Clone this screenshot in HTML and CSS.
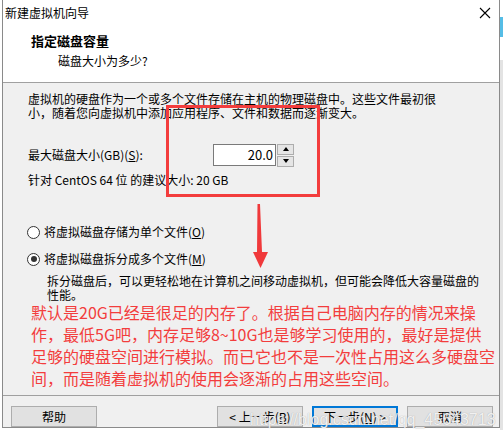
FILE: index.html
```html
<!DOCTYPE html>
<html lang="zh-CN">
<head>
<meta charset="utf-8">
<title>新建虚拟机向导</title>
<link rel="stylesheet" href="styles.css">
</head>
<body>
<div class="edge-blue"></div>
<div class="edge-gray"></div>
<div class="window">
  <div class="titlebar">
    <span class="title">新建虚拟机向导</span>
    <svg class="close" width="12" height="12" viewBox="0 0 12 12"><path d="M1 1 L11 11 M11 1 L1 11" stroke="#000" stroke-width="1.1" fill="none"/></svg>
  </div>
  <div class="header">
    <div class="heading">指定磁盘容量</div>
    <div class="subheading">磁盘大小为多少?</div>
  </div>
  <div class="body">
    <p class="intro">虚拟机的硬盘作为一个或多个文件存储在主机的物理磁盘中。这些文件最初很<br>小，随着您向虚拟机中添加应用程序、文件和数据而逐渐变大。</p>
    <div class="size-row">
      <span class="size-label">最大磁盘大小(GB)(<u>S</u>):</span>
      <div class="spin">
        <div class="spin-input">20.0</div>
        <div class="spin-btns">
          <div class="spin-btn"><span class="tri-up"></span></div>
          <div class="spin-btn"><span class="tri-down"></span></div>
        </div>
      </div>
    </div>
    <p class="recommend">针对 CentOS 64 位 的建议大小: 20 GB</p>
    <div class="radio-row first">
      <span class="radio"></span>
      <span>将虚拟磁盘存储为单个文件(<u>O</u>)</span>
    </div>
    <div class="radio-row second">
      <span class="radio checked"></span>
      <span>将虚拟磁盘拆分成多个文件(<u>M</u>)</span>
    </div>
    <p class="desc">拆分磁盘后，可以更轻松地在计算机之间移动虚拟机，但可能会降低大容量磁盘的<br>性能。</p>
    <p class="note">默认是20G已经是很足的内存了。根据自己电脑内存的情况来操<br>作，最低5G吧，内存足够8~10G也是够学习使用的，最好是提供<br>足够的硬盘空间进行模拟。而已它也不是一次性占用这么多硬盘空<br>间，而是随着虚拟机的使用会逐渐的占用这些空间。</p>
  </div>
  <div class="footer">
    <button class="btn">帮助</button>
    <div class="nav">
      <button class="btn">&lt; 上一步(<u>B</u>)</button>
      <button class="btn focused">下一步(<u>N</u>) &gt;</button>
      <button class="btn">取消</button>
    </div>
    <span class="watermark">https://blog.csdn.net/qq_45643713</span>
  </div>
  <div class="highlight"></div>
  <svg class="arrow" width="30" height="70" viewBox="245 200 30 70"><polygon points="257.5,204 260,204 262,252 268,252 260.5,268 253,252 257,252" fill="#f0393b"/></svg>
</div>
</body>
</html>
```
FILE: styles.css
```css
html, body {
  margin: 0;
  padding: 0;
  background: #ffffff;
}
body {
  width: 503px;
  height: 430px;
  position: relative;
  overflow: hidden;
  font-family: "Noto Sans CJK SC", "Microsoft YaHei", sans-serif;
  font-size: 12px;
  color: #000;
}
.edge-blue {
  position: absolute;
  left: 500px;
  top: 17px;
  width: 3px;
  height: 20px;
  background: #55bde6;
}
.edge-gray {
  position: absolute;
  left: 500px;
  top: 60px;
  width: 3px;
  height: 370px;
  background: #e3e3e3;
}
.window {
  position: relative;
  margin-left: 2px;
  width: 496px;
  height: 427px;
  border-left: 1px solid #8a8a8a;
  border-right: 1px solid #8a8a8a;
  border-bottom: 1px solid #8a8a8a;
  background: #ffffff;
  display: flex;
  flex-direction: column;
}
.titlebar {
  height: 27px;
  display: flex;
  align-items: center;
  justify-content: space-between;
  padding-left: 2px;
  padding-right: 8px;
  flex: none;
}
.title {
  line-height: 14px;
  margin-top: -1px;
}
.close {
  display: block;
  margin-top: -1px;
}
.header {
  height: 55px;
  flex: none;
  border-bottom: 1px solid #a0a0a0;
}
.heading {
  font-weight: bold;
  font-size: 13px;
  line-height: 16px;
  padding-left: 28px;
  margin-top: 6px;
}
.subheading {
  line-height: 14px;
  padding-left: 55px;
  margin-top: 5px;
}
.body {
  height: 303px;
  flex: none;
  background: #f0f0f0;
  padding: 9px 0 0 25px;
  border-bottom: 1px solid #a0a0a0;
}
.body p {
  margin: 0;
}
.intro {
  line-height: 14px;
}
.size-row {
  display: flex;
  align-items: center;
  margin-top: 24px;
  height: 22px;
}
.size-label {
  width: 185px;
  line-height: 14px;
}
.spin {
  display: flex;
  align-items: center;
}
.spin-input {
  width: 59px;
  height: 20px;
  border: 1px solid #7a7a7a;
  background: #fff;
  text-align: right;
  font-size: 13px;
  line-height: 20px;
  padding-right: 2px;
}
.spin-btns {
  display: flex;
  flex-direction: column;
  gap: 1px;
  margin-left: 1px;
}
.spin-btn {
  width: 15px;
  height: 9px;
  border: 1px solid #adadad;
  background: #e5e5e5;
  display: flex;
  align-items: center;
  justify-content: center;
}
.tri-up, .tri-down {
  width: 0;
  height: 0;
  border-left: 3.5px solid transparent;
  border-right: 3.5px solid transparent;
}
.tri-up {
  border-bottom: 4px solid #000;
}
.tri-down {
  border-top: 4px solid #000;
}
.body .recommend {
  line-height: 14px;
  margin-top: 7px;
}
.radio-row {
  display: flex;
  align-items: center;
  height: 16px;
  line-height: 14px;
}
.radio-row.first {
  margin-top: 37px;
}
.radio-row.second {
  margin-top: 11px;
}
.radio {
  width: 11px;
  height: 11px;
  border: 1px solid #333;
  border-radius: 50%;
  background: #fff;
  margin-left: -1px;
  margin-right: 4px;
  position: relative;
  flex: none;
}
.radio.checked::after {
  content: "";
  position: absolute;
  left: 2.5px;
  top: 2.5px;
  width: 6px;
  height: 6px;
  border-radius: 50%;
  background: #333;
}
.body .desc {
  line-height: 14px;
  padding-left: 19px;
  margin-top: 7px;
}
.body .note {
  color: #f33d3d;
  font-size: 16px;
  line-height: 22px;
  padding-left: 3px;
  margin-top: -1px;
  white-space: nowrap;
}
u {
  text-decoration: underline;
  text-underline-offset: 1px;
}
.footer {
  flex: 1;
  background: #f0f0f0;
  display: flex;
  align-items: flex-start;
  padding: 10px 6px 0 8px;
  position: relative;
}
.nav {
  margin-left: auto;
  display: flex;
  gap: 9px;
}
.btn {
  width: 86px;
  height: 21px;
  border: 1px solid #adadad;
  background: #e1e1e1;
  font-family: "Noto Sans CJK SC", "Microsoft YaHei", sans-serif;
  font-size: 12px;
  line-height: 14px;
  color: #000;
  padding: 0;
  margin: 0;
}
.btn.focused {
  border: 2px solid #0078d7;
}
.watermark {
  position: absolute;
  left: 247px;
  top: 15px;
  font-family: "Liberation Sans", Arial, sans-serif;
  font-size: 16px;
  line-height: 18px;
  color: rgba(255, 255, 255, 0.85);
  text-shadow: 0 0 1px rgba(110, 110, 110, 0.6);
  white-space: nowrap;
  pointer-events: none;
}
.highlight {
  position: absolute;
  left: 163px;
  top: 105px;
  width: 148px;
  height: 86px;
  border: 3px solid #f33d3d;
}
.arrow {
  position: absolute;
  left: 242px;
  top: 200px;
}
```
